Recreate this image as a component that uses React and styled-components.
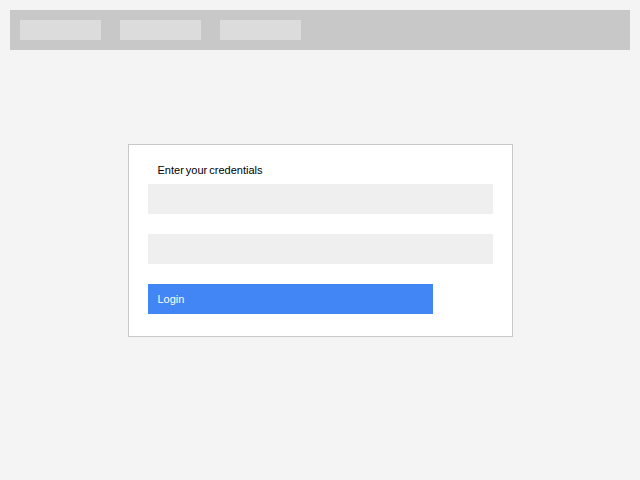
import React from 'react';
import styled, { createGlobalStyle } from 'styled-components';

const GlobalStyle = createGlobalStyle`
  html, body {
    margin: 0;
    padding: 0;
    background: #f4f4f4;
    font-family: 'Liberation Sans', Arial, sans-serif;
  }
`;

const Page = styled.div`
  padding: 10px;
`;

const TopBar = styled.nav`
  display: flex;
  gap: 19px;
  height: 40px;
  padding: 10px;
  box-sizing: border-box;
  background: #c8c8c8;
`;

const NavItem = styled.div`
  width: 81px;
  height: 20px;
  background: #dcdcdc;
`;

const Card = styled.form`
  width: 385px;
  box-sizing: border-box;
  margin: 94px auto 0;
  padding: 15px 19px 22px;
  background: #fff;
  border: 1px solid #c8c8c8;
  display: flex;
  flex-direction: column;
`;

const Label = styled.div`
  height: 20px;
  line-height: 20px;
  padding-left: 10px;
  margin-bottom: 4px;
  font-size: 11px;
  word-spacing: -1px;
  color: #000;
`;

const Field = styled.input`
  height: 30px;
  width: 345px;
  border: none;
  margin: 0 0 20px;
  padding: 0 10px;
  box-sizing: border-box;
  background: #efefef;
  outline: none;
`;

const Button = styled.button`
  height: 30px;
  width: 285px;
  border: none;
  padding: 0 10px;
  text-align: left;
  background: #4285f4;
  color: #fff;
  font-family: 'Liberation Sans', Arial, sans-serif;
  font-size: 11px;
  cursor: pointer;
`;

export default function App() {
  return (
    <Page>
      <GlobalStyle />
      <TopBar>
        <NavItem />
        <NavItem />
        <NavItem />
      </TopBar>
      <Card onSubmit={(e) => e.preventDefault()}>
        <Label>Enter your credentials</Label>
        <Field type="text" />
        <Field type="password" />
        <Button type="submit">Login</Button>
      </Card>
    </Page>
  );
}
